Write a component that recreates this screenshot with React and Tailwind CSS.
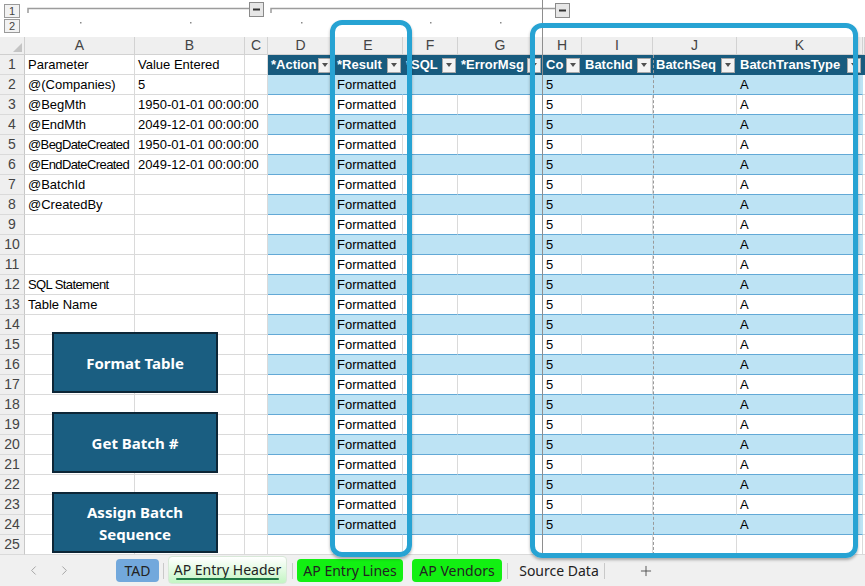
import { ChevronLeft, ChevronRight, Plus } from 'lucide-react'

const cols = [
  { id: 'A', w: 'w-[110px]' },
  { id: 'B', w: 'w-[110px]' },
  { id: 'C', w: 'w-[23px]' },
  { id: 'D', w: 'w-[66px]' },
  { id: 'E', w: 'w-[69px]' },
  { id: 'F', w: 'w-[55px]' },
  { id: 'G', w: 'w-[85px]' },
  { id: 'H', w: 'w-[39px]' },
  { id: 'I', w: 'w-[71px]' },
  { id: 'J', w: 'w-[84px]' },
  { id: 'K', w: 'w-[126px]' },
  { id: 'L', w: 'w-[2px]' },
]

const tableCols = ['D', 'E', 'F', 'G', 'H', 'I', 'J', 'K']

const headers = {
  D: '*Action', E: '*Result', F: '*SQL', G: '*ErrorMsg',
  H: 'Co', I: 'BatchId', J: 'BatchSeq', K: 'BatchTransType',
}

const params = {
  1: ['Parameter', 'Value Entered'],
  2: ['@(Companies)', '5'],
  3: ['@BegMth', '1950-01-01 00:00:00'],
  4: ['@EndMth', '2049-12-01 00:00:00'],
  5: ['@BegDateCreated', '1950-01-01 00:00:00'],
  6: ['@EndDateCreated', '2049-12-01 00:00:00'],
  7: ['@BatchId', ''],
  8: ['@CreatedBy', ''],
  12: ['SQL Statement', ''],
  13: ['Table Name', ''],
}

const rows = Array.from({ length: 25 }, (_, i) => i + 1)

function Dropdown() {
  return (
    <span className="ml-auto mr-[2px] w-[14px] h-[15px] shrink-0 bg-[#f3f3f3] border border-[#a9a9a9] flex items-center justify-center">
      <span className="w-0 h-0 border-l-[3.5px] border-r-[3.5px] border-t-[4px] border-l-transparent border-r-transparent border-t-[#505050]" />
    </span>
  )
}

function cellValue(r, id) {
  if (id === 'A' && params[r]) return params[r][0]
  if (id === 'B' && params[r]) return params[r][1]
  if (r >= 2 && r <= 24) {
    if (id === 'E') return 'Formatted'
    if (id === 'H') return '5'
    if (id === 'K') return 'A'
  }
  return ''
}

function Cell({ r, col }) {
  const inTable = tableCols.includes(col.id)
  if (r === 1 && (inTable || col.id === 'L')) {
    return (
      <div className={`${col.w} h-full shrink-0 bg-[#185b7e] flex items-center pl-[3px] text-white font-bold overflow-hidden whitespace-nowrap`}>
        {headers[col.id] && <span>{headers[col.id]}</span>}
        {headers[col.id] && <Dropdown />}
      </div>
    )
  }
  if (inTable && r >= 2 && r <= 24) {
    const blue = r % 2 === 0
    return (
      <div className={`${col.w} h-full shrink-0 border-b border-r border-b-[#62a9d6] ${blue ? 'bg-[#bde3f4] border-r-transparent' : 'bg-white border-r-[#dadada]'} pl-[3px] flex items-center overflow-hidden whitespace-nowrap text-black`}>
        {cellValue(r, col.id)}
      </div>
    )
  }
  const value = cellValue(r, col.id)
  // B spills into the empty C column, A is clipped like Excel does
  const spill = col.id === 'B' ? 'relative z-[1] overflow-visible' : 'overflow-hidden'
  const tight = col.id === 'A' && value.length > 12 ? 'tracking-[-0.6px]' : ''
  return (
    <div className={`${col.w} h-full shrink-0 border-b border-r border-[#dadada] bg-white pl-[3px] flex items-center whitespace-nowrap text-black ${spill} ${tight}`}>
      {value}
    </div>
  )
}

function SheetButton({ top, children }) {
  return (
    <div className={`absolute left-[52px] ${top} z-[2] w-[166px] h-[61px] bg-[#1a5e81] border-2 border-[#0d2636] flex items-center justify-center text-center text-white font-bold text-[15px] leading-[22px] font-['Noto_Sans',sans-serif]`}>
      {children}
    </div>
  )
}

export default function App() {
  return (
    <div className="relative w-[865px] h-[586px] overflow-hidden bg-white font-['Liberation_Sans',Arial,sans-serif] text-[13px]">
      {/* outline bar */}
      <div className="relative h-[37px]">
        <div className="absolute left-[4px] top-[4px] w-[16px] h-[14px] border border-[#9a9a9a] bg-[#f2f2f2] flex items-center justify-center text-[11px] leading-none text-[#444]">1</div>
        <div className="absolute left-[4px] top-[19px] w-[16px] h-[14px] border border-[#9a9a9a] bg-[#f2f2f2] flex items-center justify-center text-[11px] leading-none text-[#444]">2</div>
        <svg className="absolute inset-0" width="865" height="37">
          <path d="M28 13 V8.5 H249" fill="none" stroke="#9c9c9c" strokeWidth="1.5" />
          <path d="M271 13 V8.5 H555" fill="none" stroke="#9c9c9c" strokeWidth="1.5" />
          <rect x="249.5" y="2.5" width="14" height="14" fill="#e6e6e6" stroke="#8a8a8a" />
          <rect x="253" y="8.5" width="7" height="2" fill="#333" />
          <rect x="555.5" y="3.5" width="14" height="14" fill="#e6e6e6" stroke="#8a8a8a" />
          <rect x="559" y="9.5" width="7" height="2" fill="#333" />
          {[80, 190, 301, 368, 430, 500].map(x => (
            <rect key={x} x={x} y="22" width="1.5" height="1.5" fill="#8a8a8a" />
          ))}
        </svg>
      </div>

      {/* column letters */}
      <div className="flex h-[18px]">
        <div className="relative w-[25px] h-full shrink-0 bg-[#efefef] border-r border-b border-[#cfcfcf]">
          <svg className="absolute right-[2px] bottom-[2px]" width="9" height="9">
            <path d="M9 0 V9 H0 Z" fill="#c4c4c4" />
          </svg>
        </div>
        {cols.map(c => (
          <div key={c.id} className={`${c.w} h-full shrink-0 bg-[#efefef] border-r border-b border-[#d2d2d2] flex items-center justify-center text-[#444] text-[14px] overflow-hidden`}>
            {c.id !== 'L' && c.id}
          </div>
        ))}
      </div>

      {/* rows */}
      <div className="relative">
        {rows.map(r => (
          <div key={r} className="flex h-[20px]">
            <div className="w-[25px] h-full shrink-0 bg-[#efefef] border-r border-r-[#c8c8c8] border-b border-b-[#dadada] flex items-center justify-center text-[#444] text-[14px]">
              {r}
            </div>
            {cols.map(c => <Cell key={c.id} r={r} col={c} />)}
          </div>
        ))}

        <SheetButton top="top-[277px]">Format Table</SheetButton>
        <SheetButton top="top-[357px]">Get Batch #</SheetButton>
        <SheetButton top="top-[437px]">Assign Batch<br />Sequence</SheetButton>
      </div>

      {/* tab bar */}
      <div className="flex items-center h-[31px] bg-[#f0f0f0] font-['Noto_Sans',sans-serif] text-[14px] text-[#222]">
        <div className="w-[116px] flex items-center pl-[26px] text-[#a0a0a0]">
          <ChevronLeft size={15} strokeWidth={1.5} />
          <ChevronRight size={15} strokeWidth={1.5} className="ml-[16px]" />
        </div>
        <div className="w-[43px] h-[23px] rounded-[4px] bg-[#72a8dc] flex items-center justify-center">TAD</div>
        <div className="w-[9px] flex justify-center"><div className="w-px h-[16px] bg-[#c9c9c9]" /></div>
        <div className="relative w-[119px] h-[28px] self-end mb-[2px] rounded-[4px] border border-[#d8e8d8] bg-gradient-to-b from-white to-[#c3f5c3] flex justify-center pt-[2px]">
          <span>AP Entry Header</span>
          <div className="absolute left-[7px] right-[7px] bottom-[3px] h-[2px] bg-[#1e7a45] rounded" />
        </div>
        <div className="w-[10px] flex justify-center"><div className="w-px h-[16px] bg-[#c9c9c9]" /></div>
        <div className="w-[106px] h-[23px] rounded-[4px] bg-[#12f012] flex items-center justify-center">AP Entry Lines</div>
        <div className="w-[9px]" />
        <div className="w-[90px] h-[23px] rounded-[4px] bg-[#12f012] flex items-center justify-center">AP Vendors</div>
        <div className="w-[10px] flex justify-center"><div className="w-px h-[16px] bg-[#c9c9c9]" /></div>
        <div className="w-[92px] flex justify-center pl-[2px]">Source Data</div>
        <div className="w-[12px] flex justify-start"><div className="w-px h-[16px] bg-[#c9c9c9]" /></div>
        <div className="w-[60px] flex justify-center text-[#444]">
          <Plus size={16} strokeWidth={1.3} />
        </div>
      </div>

      {/* freeze line and page break */}
      <div className="absolute left-[542px] top-0 h-[555px] w-px bg-[#8e8e8e]" />
      <div className="absolute left-[653px] top-[55px] h-[500px] border-l border-dashed border-[#9a9a9a]" />

      {/* highlight boxes */}
      <div className="absolute left-[330px] top-[20px] w-[82px] h-[537px] rounded-[12px] border-[5px] border-[#27a3d3] shadow-[0_2px_3px_rgba(0,0,0,0.3)]" />
      <div className="absolute left-[530px] top-[23px] w-[328px] h-[535px] rounded-[12px] border-[5px] border-[#27a3d3] shadow-[0_2px_3px_rgba(0,0,0,0.3)]" />
    </div>
  )
}
